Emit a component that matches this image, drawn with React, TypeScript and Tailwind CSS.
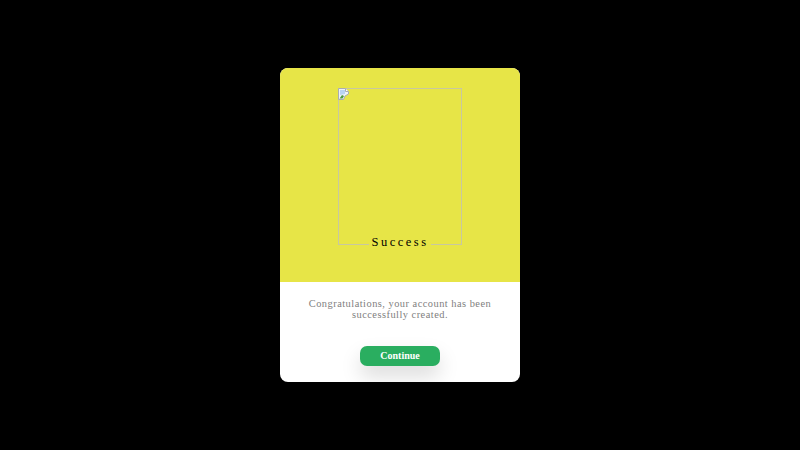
import React from 'react';

// Icône d'image cassée, coin haut gauche du cadre
function BrokenImage() {
  return (
    <svg width="11" height="12" viewBox="0 0 11 12" className="-mt-px -ml-px block">
      <path d="M0.5 0.5H7.5L10.5 3.5V6L7 8L5.5 11.5H0.5Z" fill="#eef2f6" stroke="#a8adb3" />
      <path d="M7.5 0.5V3.5H10.5" fill="#ffffff" stroke="#a8adb3" />
      <path d="M2 2H7V6L2 7Z" fill="#b9d3f2" />
      <path d="M1.5 10.5L4 7L6 8L4.5 10.5Z" fill="#4f9a3d" />
    </svg>
  );
}

export default function App() {
  return (
    <div className="flex h-[450px] w-[800px] items-start justify-center bg-black pt-[68px] font-['Liberation_Serif',serif]">
      <div className="flex h-[314px] w-[240px] flex-col overflow-hidden rounded-lg bg-white">
        <div className="flex h-[214px] flex-col items-center bg-[#e7e547] pt-5">
          <div className="h-[157px] w-[124px] border border-[#c8c8a0]">
            <BrokenImage />
          </div>
          <h1 className="-mt-[11px] bg-[#e7e547] px-[2px] text-[12.5px] leading-[16px] font-normal tracking-[2.5px] text-black">
            Success
          </h1>
        </div>
        <div className="flex flex-1 flex-col items-center pt-[16px]">
          <p className="w-[200px] text-center text-[10.4px] leading-[11px] tracking-[0.48px] text-[#808080]">
            Congratulations, your account has been successfully created.
          </p>
          <button className="mt-[26px] h-[20px] w-[80px] rounded-[7px] bg-[#2aae60] text-center text-[10px] leading-[20px] font-bold text-white shadow-[0_10px_20px_rgba(0,0,0,0.15)]">
            Continue
          </button>
        </div>
      </div>
    </div>
  );
}
